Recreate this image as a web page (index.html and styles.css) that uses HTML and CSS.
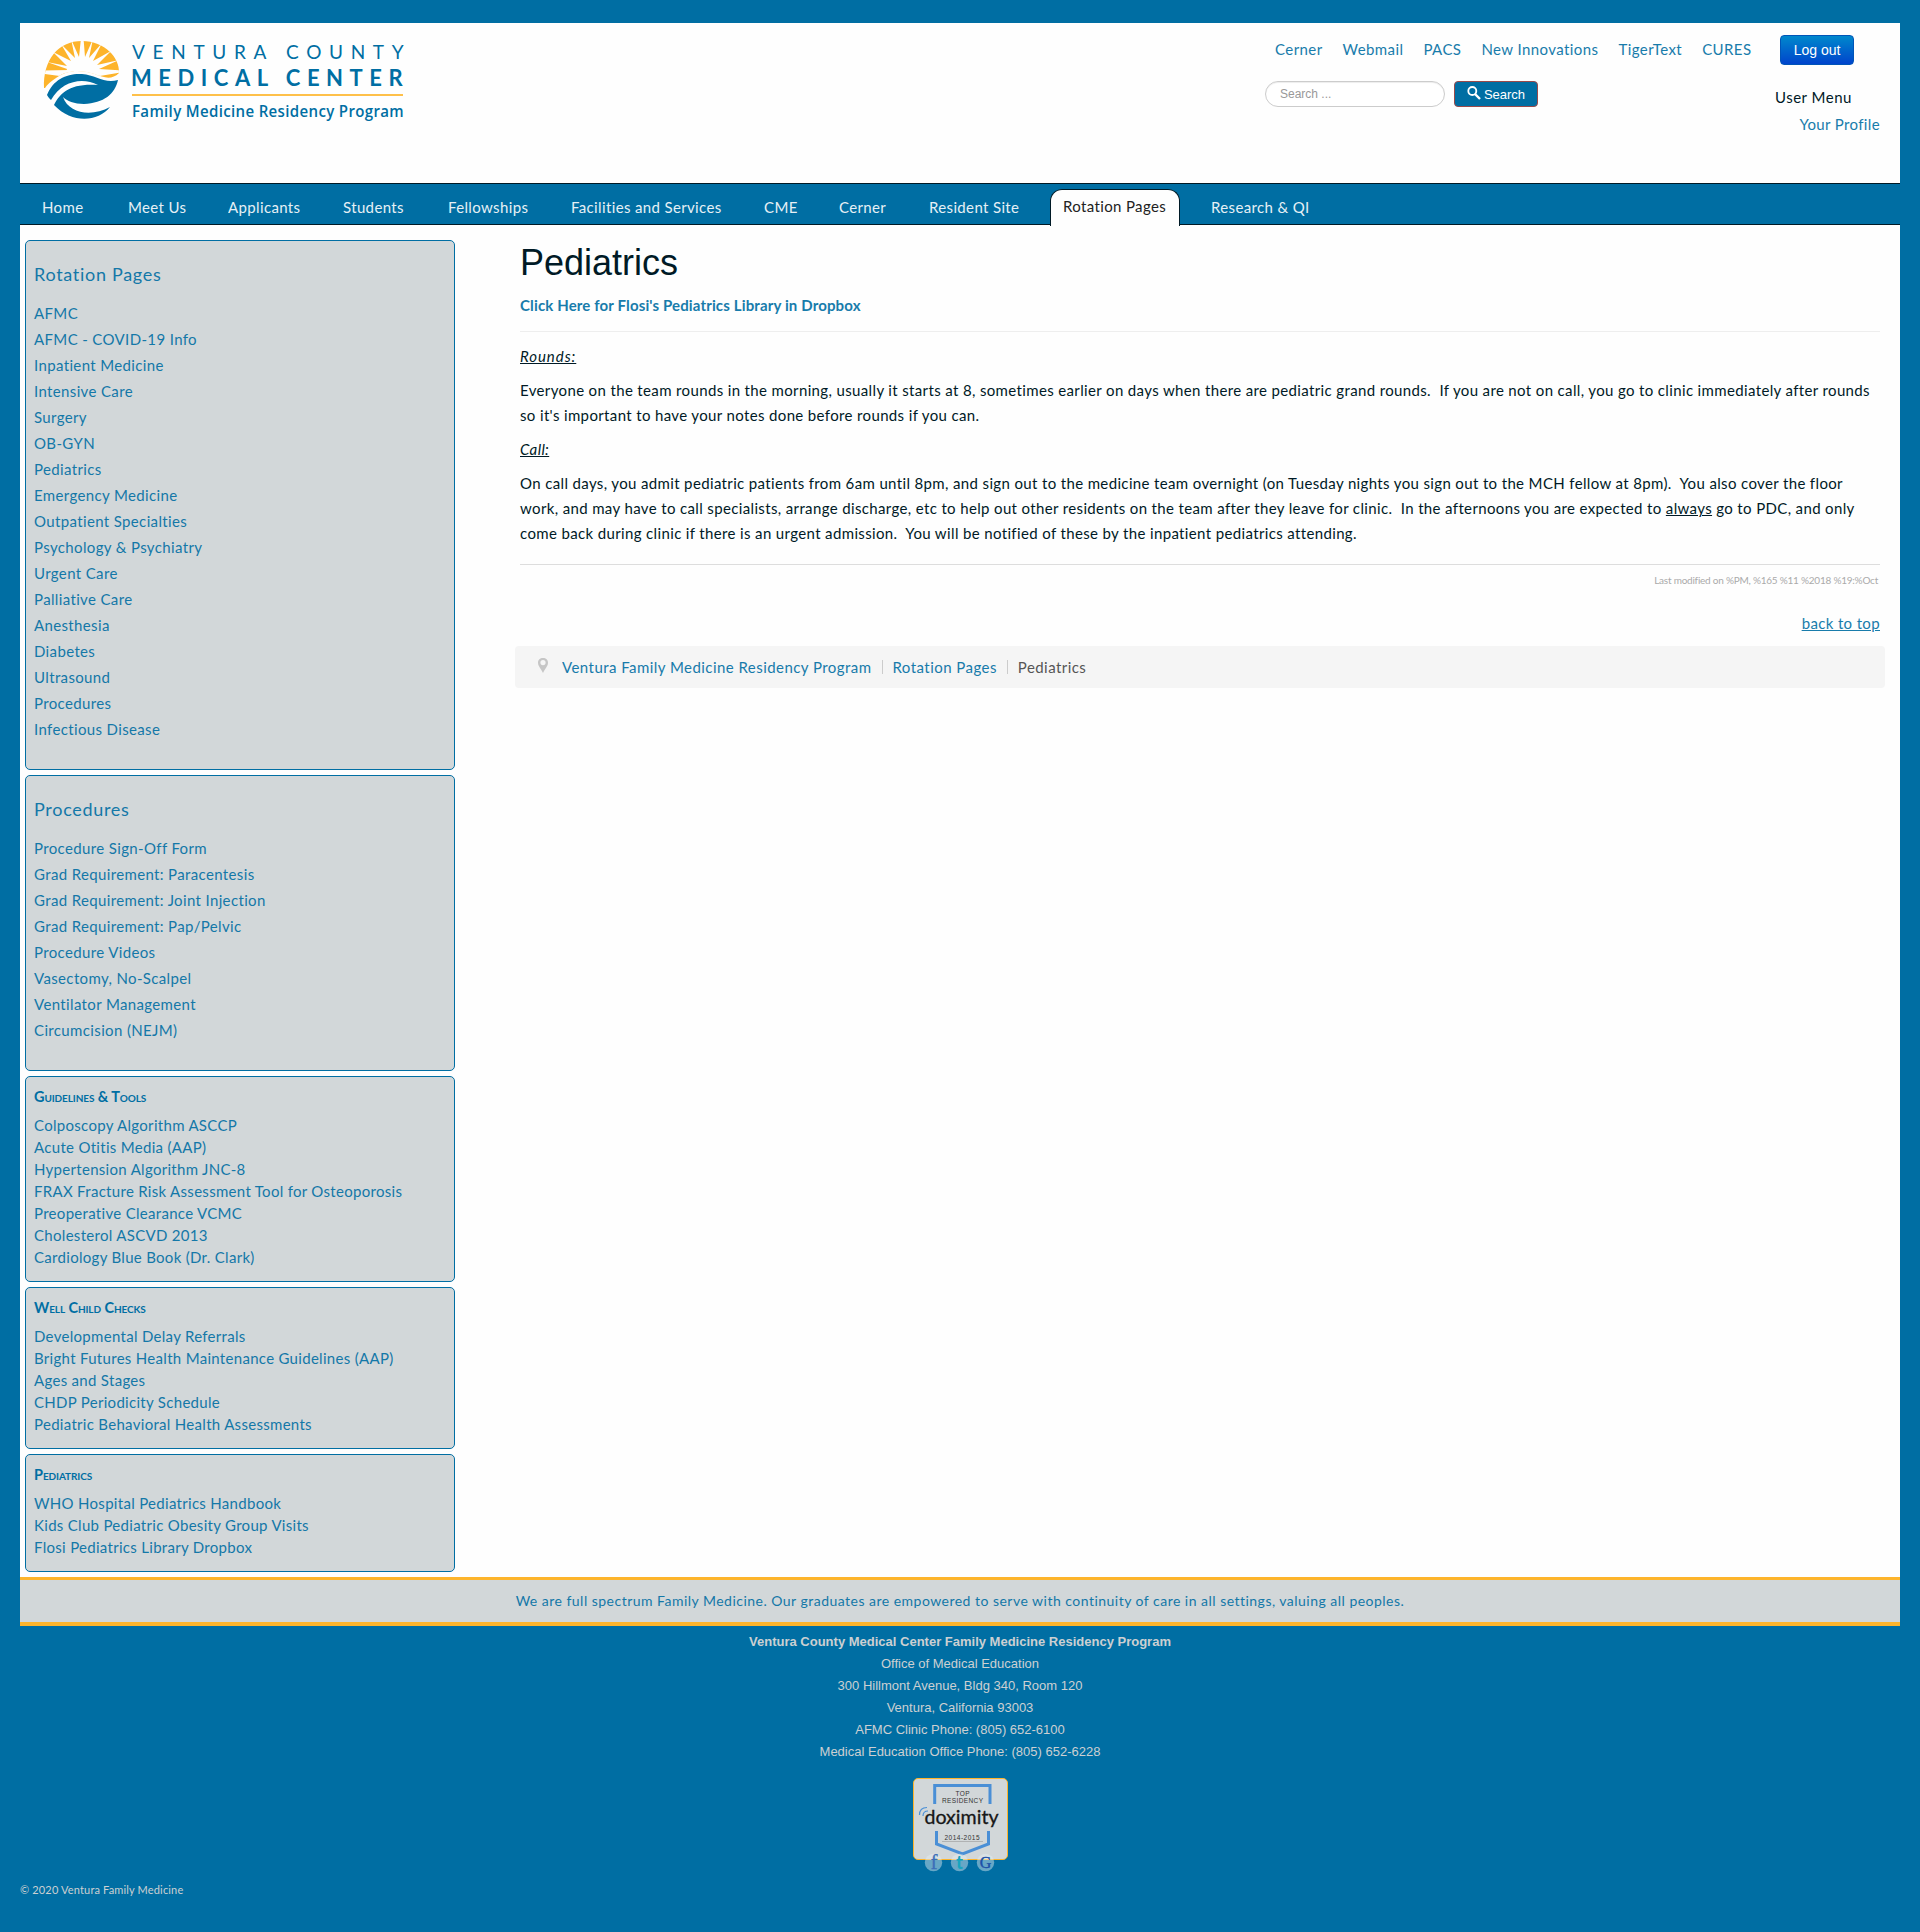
FILE: index.html
```html
<!DOCTYPE html>
<html lang="en">
<head>
<meta charset="utf-8">
<title>Pediatrics</title>
<link rel="stylesheet" href="styles.css">
</head>
<body>
<div class="page">
  <header class="header">
    <svg class="logo" width="380" height="100" viewBox="38 33 380 100" role="img" aria-label="Ventura County Medical Center Family Medicine Residency Program">
      <defs><clipPath id="sky"><path d="M44 88C43 60 58 41 82 41C105 41 120 58 119 73C112 80 104 78 95 74C80 69 66 70 56 78C51 81 47 85 45 88Z"/></clipPath></defs>
      <g clip-path="url(#sky)">
        <rect x="40" y="38" width="82" height="52" fill="#fdb42b"/>
        <path fill="#fefefe" d="M82 79L42 73.500L42 70.500L70 70L47 62L67 66L53 52L71 61L61 44L75 58L71 39L79 57L81 38L83.500 38L85 57L93 39L89 58L102 43L93 61L111 51L97 65L119 60L99 69L121 70.500L121 72.500Z"/>
        <ellipse cx="82" cy="75" rx="17" ry="12" fill="#fefefe"/>
      </g>
      <path fill="#006ea3" d="M47 95C53 79 68 73 82 74C96 75 104 84 118 80C115 94 104 103 84 104C74 104 67 101 63 97C69 114 92 117 110 107C98 122 72 124 54 105C60 93 70 83 98 85C82 77 62 81 51 100C49 98 48 97 47 95Z"/>
      <g fill="#006ea3" font-family="Lato, sans-serif">
        <text x="132" y="59" font-size="19" textLength="272">VENTURA COUNTY</text>
        <text x="131" y="86" font-size="22" font-weight="700" textLength="272">MEDICAL CENTER</text>
        <text x="132" y="116.500" font-family="Open Sans, sans-serif" font-size="16" font-weight="600" textLength="272" lengthAdjust="spacingAndGlyphs">Family Medicine Residency Program</text>
      </g>
      <rect x="132" y="94" width="271" height="2" fill="#fec04a"/>
    </svg>
    <div class="tools">
      <nav class="quick"><a>Cerner</a><a>Webmail</a><a>PACS</a><a>New Innovations</a><a>TigerText</a><a>CURES</a></nav>
      <form class="search">
        <input class="query" type="text" placeholder="Search ...">
        <button class="go" type="button"><svg width="14" height="14" viewBox="0 0 14 14"><circle cx="5.300" cy="5" r="4" fill="none" stroke="#fff" stroke-width="1.800"/><path d="M8 8l5 5" stroke="#fff" stroke-width="2.400"/></svg>Search</button>
      </form>
    </div>
    <div class="user">
      <button class="logout" type="button">Log out</button>
      <div class="user-title">User Menu</div>
      <a class="profile">Your Profile</a>
    </div>
  </header>
  <nav class="menu">
    <a>Home</a><a>Meet Us</a><a>Applicants</a><a>Students</a><a>Fellowships</a><a>Facilities and Services</a><a>CME</a><a>Cerner</a><a>Resident Site</a><a class="active">Rotation Pages</a><a>Research &amp; QI</a>
  </nav>
  <div class="body">
    <aside class="side">
      <section class="box">
        <h3>Rotation Pages</h3>
        <ul><li>AFMC</li><li>AFMC - COVID-19 Info</li><li>Inpatient Medicine</li><li>Intensive Care</li><li>Surgery</li><li>OB-GYN</li><li>Pediatrics</li><li>Emergency Medicine</li><li>Outpatient Specialties</li><li>Psychology &amp; Psychiatry</li><li>Urgent Care</li><li>Palliative Care</li><li>Anesthesia</li><li>Diabetes</li><li>Ultrasound</li><li>Procedures</li><li>Infectious Disease</li></ul>
      </section>
      <section class="box">
        <h3>Procedures</h3>
        <ul><li>Procedure Sign-Off Form</li><li>Grad Requirement: Paracentesis</li><li>Grad Requirement: Joint Injection</li><li>Grad Requirement: Pap/Pelvic</li><li>Procedure Videos</li><li>Vasectomy, No-Scalpel</li><li>Ventilator Management</li><li>Circumcision (NEJM)</li></ul>
      </section>
      <section class="box compact">
        <h4>Guidelines &amp; Tools</h4>
        <ul><li>Colposcopy Algorithm ASCCP</li><li>Acute Otitis Media (AAP)</li><li>Hypertension Algorithm JNC-8</li><li>FRAX Fracture Risk Assessment Tool for Osteoporosis</li><li>Preoperative Clearance VCMC</li><li>Cholesterol ASCVD 2013</li><li>Cardiology Blue Book (Dr. Clark)</li></ul>
      </section>
      <section class="box compact">
        <h4>Well Child Checks</h4>
        <ul><li>Developmental Delay Referrals</li><li>Bright Futures Health Maintenance Guidelines (AAP)</li><li>Ages and Stages</li><li>CHDP Periodicity Schedule</li><li>Pediatric Behavioral Health Assessments</li></ul>
      </section>
      <section class="box compact">
        <h4>Pediatrics</h4>
        <ul><li>WHO Hospital Pediatrics Handbook</li><li>Kids Club Pediatric Obesity Group Visits</li><li>Flosi Pediatrics Library Dropbox</li></ul>
      </section>
    </aside>
    <main class="main">
      <h1>Pediatrics</h1>
      <p class="lead"><a>Click Here for Flosi's Pediatrics Library in Dropbox</a></p>
      <hr>
      <p class="term rounds">Rounds:</p>
      <p>Everyone on the team rounds in the morning, usually it starts at 8, sometimes earlier on days when there are pediatric grand rounds.&nbsp; If you are not on call, you go to clinic immediately after rounds<br>so it's important to have your notes done before rounds if you can.</p>
      <p class="term">Call:</p>
      <p>On call days, you admit pediatric patients from 6am until 8pm, and sign out to the medicine team overnight (on Tuesday nights you sign out to the MCH fellow at 8pm).&nbsp; You also cover the floor<br>work, and may have to call specialists, arrange discharge, etc to help out other residents on the team after they leave for clinic.&nbsp; In the afternoons you are expected to <u>always</u> go to PDC, and only<br>come back during clinic if there is an urgent admission.&nbsp; You will be notified of these by the inpatient pediatrics attending.</p>
      <div class="modified">Last modified on %PM, %165 %11 %2018 %19:%Oct</div>
      <div class="top"><a>back to top</a></div>
      <div class="crumbs">
        <svg width="10" height="15" viewBox="0 0 10 15"><path fill="#c6c6c6" fill-rule="evenodd" d="M5 0C8 0 10 2 10 4.800C10 8 7 11 5 15C3 11 0 8 0 4.800C0 2 2 0 5 0ZM5 2A2.600 2.600 0 1 0 5 7.200A2.600 2.600 0 1 0 5 2Z"/></svg>
        <a>Ventura Family Medicine Residency Program</a><i></i><a>Rotation Pages</a><i></i><span>Pediatrics</span>
      </div>
    </main>
  </div>
  <div class="band"><span>We are full spectrum Family Medicine. Our graduates are empowered to serve with continuity of care in all settings, valuing all peoples.</span></div>
  <footer class="footer">
    <b>Ventura County Medical Center Family Medicine Residency Program</b>
    <div>Office of Medical Education</div>
    <div>300 Hillmont Avenue, Bldg 340, Room 120</div>
    <div>Ventura, California 93003</div>
    <div>AFMC Clinic Phone: (805) 652-6100</div>
    <div>Medical Education Office Phone: (805) 652-6228</div>
    <svg class="badge" width="96" height="96" viewBox="912 1778 96 96">
      <rect x="913.500" y="1778.500" width="94" height="81" rx="4.500" fill="#d2d7d9" stroke="#fdb42b"/>
      <g fill="none" stroke="#4a8fd6" stroke-width="3">
        <path d="M934.700 1804V1785.500H990V1804M936.500 1831V1844L962.500 1854L988.500 1844V1831"/>
        <path stroke-width="1.200" d="M919.500 1815C919.500 1810 922.500 1807.500 927 1807.500M923 1816C923 1813 925 1811 928 1811"/>
      </g>
      <path d="M942 1841.500H983" stroke="#999" stroke-width=".6"/>
      <g font-family="Liberation Sans, sans-serif" fill="#333" text-anchor="middle">
        <text x="962.500" y="1795.500" font-size="6.500" textLength="14">TOP</text>
        <text x="962.500" y="1802.500" font-size="6.500" textLength="41">RESIDENCY</text>
        <text x="962" y="1840" font-size="6.500" textLength="35">2014-2015</text>
        <text x="961.500" y="1824" font-family="Lato, sans-serif" font-size="19.500" fill="#171717" stroke="#171717" stroke-width=".3" textLength="74" lengthAdjust="spacingAndGlyphs">doximity</text>
      </g>
      <g fill="#e4edf2" fill-opacity=".45"><circle cx="933.500" cy="1862.500" r="8.700"/><circle cx="959.500" cy="1862.500" r="8.700"/><circle cx="985.500" cy="1862.500" r="8.700"/></g>
      <g text-anchor="middle" font-family="Liberation Serif, serif">
        <text x="934" y="1868.500" font-size="20" fill="#3c6fb8" stroke="#3c6fb8" stroke-width=".4">f</text>
        <text x="959.500" y="1868.500" font-family="Lato, sans-serif" font-size="18" font-weight="900" fill="#17a5bf">t</text>
        <text x="985.500" y="1868" font-size="16" fill="#1c50a8" stroke="#1c50a8" stroke-width=".4">G</text>
      </g>
    </svg>
    <div class="copy">© 2020 Ventura Family Medicine</div>
  </footer>
</div>
</body>
</html>
```
FILE: styles.css
```css
* { box-sizing: border-box; }
body { margin: 0; background: #006ea3; color: #001a26; font: 15px/25px Lato, sans-serif; letter-spacing: .36px; }
.page { margin: 0 20px; padding-top: 23px; height: 1932px; }
a { color: #006ea3; opacity: .9; }
ul, h1, h3, h4, p { margin: 0; padding: 0; }
ul { list-style: none; }

.header { height: 160px; background: #fefefe; display: flex; white-space: nowrap; }
.logo { margin: 10px 0 0 18px; flex: none; }
.tools { margin-left: 847px; width: 510px; padding-top: 14px; flex: none; }
.quick { display: flex; gap: 20px; padding-left: 10px; letter-spacing: .42px; }
.search { display: flex; gap: 9px; margin-top: 19px; }
.query { width: 180px; height: 26px; border: 1px solid #ccc; border-radius: 13px; padding: 0 14px; font: 12px "Liberation Sans", sans-serif; background: #fff; box-shadow: inset 0 1px 1px rgba(0,0,0,.075); }
.query::placeholder { color: #999; }
.go { width: 84px; height: 26px; padding: 0; border: 1px solid #9a4a4a; border-radius: 4px; background: #006ea3; color: #fff; font: 13px "Liberation Sans", sans-serif; display: flex; align-items: center; justify-content: center; gap: 3px; }
.go svg { margin-top: -3px; }
.user { padding-top: 12px; width: 105px; flex: none; display: flex; flex-direction: column; }
.logout { margin-left: 5px; width: 74px; height: 30px; padding: 0; border: 1px solid #0055b8; border-radius: 4px; background: linear-gradient(#0088cc, #0044cc); color: #fff; font: 14px "Liberation Sans", sans-serif; }
.user-title { margin: 20px 0 2px; letter-spacing: .5px; }
.profile { align-self: flex-end; }

.menu { height: 42px; background: #006ea3; border: 1px solid #001a26; border-width: 1px 0; padding-left: 22px; display: grid; grid-template-columns: 86px 100px 115px 105px 123px 193px 75px 90px 121px 130px 120px; white-space: nowrap; }
.menu a { color: #fff; padding-top: 11px; }
.menu .active { color: #222; opacity: 1; background: #fefefe; border: 1px solid #001a26; border-bottom: 0; border-radius: 12px 12px 0 0; margin-top: 5px; height: 37px; padding: 4px 0 0 12px; }
.menu a:last-child { padding-left: 31px; }

.body { background: #fefefe; height: 1352px; display: flex; }
.side { width: 435px; padding: 15px 0 0 5px; display: flex; flex-direction: column; gap: 5px; }
.box { background: #d2d7d9; border: 1px solid #006ea3; border-radius: 5px; padding: 16px 8px 27px; color: #1478a8; white-space: nowrap; }
h3 { font: 18px/34px Lato, sans-serif; letter-spacing: .7px; margin-bottom: 9px; }
li { line-height: 26px; }
.compact { padding: 8px 8px 13px; }
h4 { font: bold 14.5px/24px Lato, sans-serif; font-variant: small-caps; color: #006ea3; letter-spacing: -.1px; margin-bottom: 5px; }
.compact li { line-height: 22px; letter-spacing: .3px; }

.main { margin-left: 65px; width: 1360px; padding-top: 16px; white-space: nowrap; }
h1 { font: 36px/44px "Liberation Sans", sans-serif; letter-spacing: 0; }
.lead { font-weight: bold; margin-top: 8px; letter-spacing: .14px; }
hr { border: 0; border-top: 1px solid #eee; margin: 13px 0 12px; }
.main p + p { margin-top: 9px; }
.term { font-style: italic; text-decoration: underline; }
.rounds { letter-spacing: .95px; }
.modified { border-top: 1px solid #ddd; margin-top: 18px; padding-right: 2px; text-align: right; font-size: 10px; line-height: 31px; color: #aaa; letter-spacing: -.23px; }
.top { text-align: right; text-decoration: underline; color: #006ea3; margin-top: 15px; }
.crumbs { margin: 10px -5px 0; height: 42px; background: #f5f5f5; border-radius: 4px; display: flex; align-items: center; padding-left: 23px; color: #555; letter-spacing: .45px; }
.crumbs svg { margin: -4px 14px 0 0; }
.crumbs i { width: 1px; height: 14px; background: #ccc; margin: 0 10px; }

.band { height: 49px; background: #d2d7d9; border-top: 3px solid #fdb42b; border-bottom: 4px solid #fdb42b; text-align: center; color: #1478a8; font-size: 14px; line-height: 42px; letter-spacing: .48px; }
.footer { text-align: center; color: #ccd0d2; font: 13px/22px "Liberation Sans", sans-serif; letter-spacing: 0; padding-top: 5px; }
.footer b { display: block; }
.badge { display: block; margin: 15px auto 0; }
.copy { text-align: left; font: 11px/20px Lato, sans-serif; letter-spacing: .16px; margin-top: 6px; }
```
